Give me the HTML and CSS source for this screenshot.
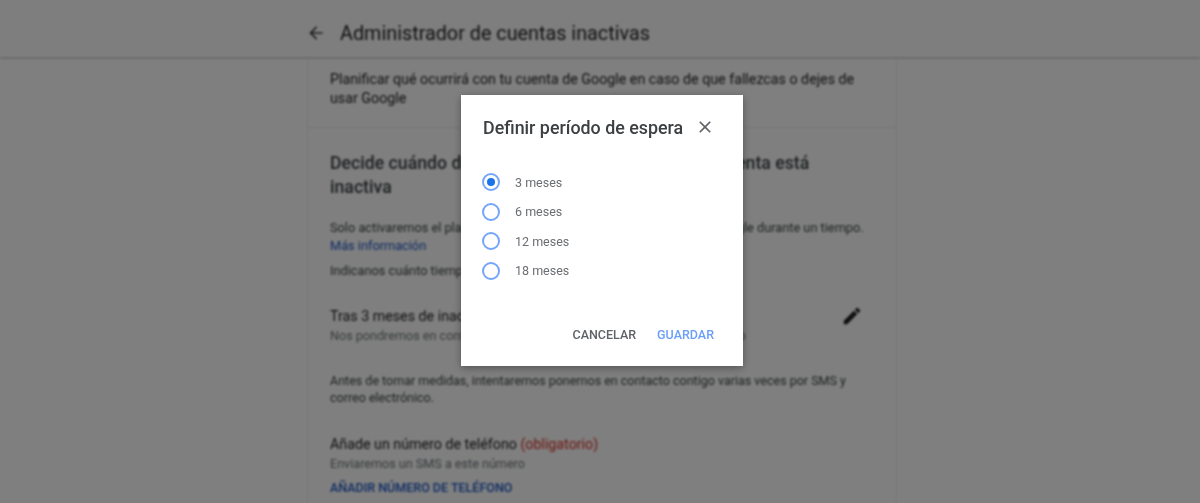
FILE: index.html
```html
<!DOCTYPE html>
<html lang="es">
<head>
<meta charset="utf-8">
<title>Administrador de cuentas inactivas</title>
<link rel="stylesheet" href="styles.css">
</head>
<body>
<div class="page">
  <header class="topbar">
    <svg class="back" viewBox="0 0 24 24" width="20" height="20"><path d="M20 11H7.83l5.59-5.59L12 4l-8 8 8 8 1.41-1.41L7.83 13H20v-2z"/></svg>
    <h1 class="title">Administrador de cuentas inactivas</h1>
  </header>
  <main class="card">
    <section class="intro">
      <p class="body">Planificar qué ocurrirá con tu cuenta de Google en caso de que fallezcas o dejes de usar Google</p>
    </section>
    <section class="settings">
      <h2 class="heading">Decide cuándo deberíamos dar por hecho que tu cuenta está inactiva</h2>
      <p class="small solo">Solo activaremos el plan cuando hayas dejado de usar tu cuenta de Google durante un tiempo. <a class="link">Más información</a></p>
      <p class="small indica">Indicanos cuánto tiempo debemos esperar</p>
      <div class="row">
        <div>
          <div class="label">Tras 3 meses de inactividad</div>
          <div class="small sub">Nos pondremos en contacto contigo un mes antes de que termine el plazo</div>
        </div>
        <svg class="edit" viewBox="0 0 24 24" width="24" height="24"><path d="M3 17.25V21h3.75L17.81 9.94l-3.75-3.75L3 17.25zM20.71 7.04a1 1 0 0 0 0-1.41l-2.34-2.34a1 1 0 0 0-1.41 0l-1.83 1.83 3.75 3.75 1.83-1.83z"/></svg>
      </div>
      <p class="small antes">Antes de tomar medidas, intentaremos ponernos en contacto contigo varias veces por SMS y correo electrónico.</p>
      <div class="label phone">Añade un número de teléfono <span class="req">(obligatorio)</span></div>
      <div class="small sub">Enviaremos un SMS a este número</div>
      <a class="add">AÑADIR NÚMERO DE TELÉFONO</a>
    </section>
  </main>
</div>
<div class="scrim"></div>
<div class="dialog">
  <div class="dialog-head">
    <h3 class="dialog-title">Definir período de espera</h3>
    <svg class="close" viewBox="0 0 24 24" width="24" height="24"><path d="M19 6.41 17.59 5 12 10.59 6.41 5 5 6.41 10.59 12 5 17.59 6.41 19 12 13.41 17.59 19 19 17.59 13.41 12z"/></svg>
  </div>
  <ul class="options">
    <li class="option"><span class="radio on"></span>3 meses</li>
    <li class="option"><span class="radio"></span>6 meses</li>
    <li class="option"><span class="radio"></span>12 meses</li>
    <li class="option"><span class="radio"></span>18 meses</li>
  </ul>
  <div class="actions">
    <button class="btn">CANCELAR</button>
    <button class="btn primary">GUARDAR</button>
  </div>
</div>
</body>
</html>
```
FILE: styles.css
```css
* { box-sizing: border-box; }
html, body { margin: 0; height: 503px; overflow: hidden; }
body { background: #fff; font-family: Roboto, "Liberation Sans", sans-serif; color: #3c4043; }
p, h1, h2, h3, ul { margin: 0; padding: 0; font-weight: 400; }
.page { height: 503px; overflow: hidden; filter: blur(0.8px); }
.topbar { height: 59px; display: flex; align-items: center; padding: 9px 0 0 306px; border-bottom: 2px solid #d8d8d8; background: #fdfdfd; }
.back { fill: #3c4043; margin-right: 14px; }
.title { font-size: 19.8px; color: #202124; }
.card { width: 590px; margin-left: 307px; height: 444px; border-left: 1px solid #eee; border-right: 1px solid #eee; }
.intro { height: 69px; padding: 11px 22px 0; border-bottom: 1px solid #e8e8e8; }
.body { font-size: 14.25px; line-height: 19px; color: #202124; }
.settings { padding: 23px 22px 0; }
.heading { font-size: 17.7px; line-height: 24px; font-weight: 500; color: #3c4043; max-width: 500px; }
.small { font-size: 12.75px; line-height: 18px; color: #3c4043; }
.solo { margin-top: 20px; }
.link { display: block; color: #1a56c4; }
.indica { margin-top: 7px; }
.row { display: flex; justify-content: space-between; margin-top: 26px; }
.label { font-size: 14.25px; line-height: 20px; color: #202124; }
.sub { color: #70757a; margin-top: 1px; font-size: 12.6px; }
.edit { fill: #202124; margin: -1px 11px 0 0; width: 22px; height: 22px; }
.antes { margin-top: 27px; line-height: 17px; font-size: 12.5px; }
.phone { margin-top: 28px; }
.req { color: #d93025; }
.add { display: block; margin-top: 6px; font-size: 12.5px; font-weight: 500; line-height: 18px; color: #1a56c4; }
.scrim { position: fixed; inset: 0; background: rgba(0, 0, 0, .5); }
.dialog { position: fixed; left: 461px; top: 95px; width: 282px; height: 271px; background: #fff; box-shadow: 0 2px 8px rgba(0,0,0,.35); padding: 22px 22px 0; display: flex; flex-direction: column; }
.dialog-head { display: flex; justify-content: space-between; align-items: center; height: 20px; filter: blur(0.6px); }
.dialog-title { font-size: 17.85px; font-weight: 500; color: #3c4043; white-space: nowrap; }
.close { fill: #5f6368; width: 20px; height: 20px; margin-right: 6px; }
.options { list-style: none; margin-top: 36px; display: flex; flex-direction: column; gap: 11.5px; filter: blur(0.7px); }
.option { display: flex; align-items: center; height: 18px; font-size: 12.5px; color: #6b6e72; }
.radio { width: 18px; height: 18px; border: 2.5px solid #75a5fa; border-radius: 50%; margin: 0 15px 0 -1px; display: flex; align-items: center; justify-content: center; }
.radio.on::after { content: ""; width: 8px; height: 8px; border-radius: 50%; background: #1a73e8; }
.actions { margin-top: auto; margin-bottom: 22px; display: flex; justify-content: flex-end; gap: 21px; padding-right: 7px; filter: blur(0.6px); }
.btn { border: 0; padding: 0; background: none; font: 500 12.5px/18px Roboto, "Liberation Sans", sans-serif; color: #5f6368; white-space: nowrap; }
.btn.primary { color: #6a9ffa; }
```
